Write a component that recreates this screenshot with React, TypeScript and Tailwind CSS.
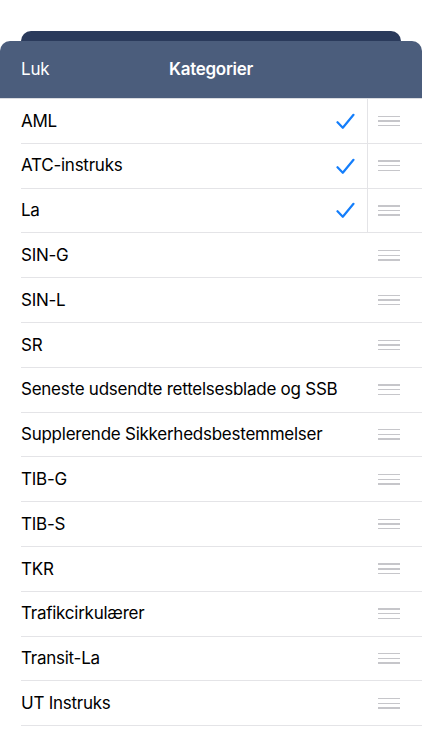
import React from "react";

const items: { name: string; checked: boolean }[] = [
  { name: "AML", checked: true },
  { name: "ATC-instruks", checked: true },
  { name: "La", checked: true },
  { name: "SIN-G", checked: false },
  { name: "SIN-L", checked: false },
  { name: "SR", checked: false },
  { name: "Seneste udsendte rettelsesblade og SSB", checked: false },
  { name: "Supplerende Sikkerhedsbestemmelser", checked: false },
  { name: "TIB-G", checked: false },
  { name: "TIB-S", checked: false },
  { name: "TKR", checked: false },
  { name: "Trafikcirkulærer", checked: false },
  { name: "Transit-La", checked: false },
  { name: "UT Instruks", checked: false },
];

function Check() {
  return (
    <svg width="19" height="17" viewBox="0 0 19 17" fill="none">
      <path d="M1.5 9.2 L6.8 14.8 L17.5 1.8" stroke="#147efb" strokeWidth="2.2" strokeLinecap="round" strokeLinejoin="round" />
    </svg>
  );
}

function Grip() {
  return (
    <div className="flex flex-col gap-[3.3px]">
      <div className="w-[22px] h-[1.4px] bg-[#c6c6ca]" />
      <div className="w-[22px] h-[1.4px] bg-[#c6c6ca]" />
      <div className="w-[22px] h-[1.4px] bg-[#c6c6ca]" />
    </div>
  );
}

export default function App() {
  return (
    <div
      className="w-[422px] h-[750px] bg-white overflow-hidden flex flex-col"
      style={{ fontFamily: "Inter, 'Liberation Sans', sans-serif" }}
    >
      <div className="h-[31px] shrink-0" />
      <div className="mx-[21px] h-[11px] bg-[#2a3a5b] rounded-t-[10px] shrink-0" />
      <div className="bg-[#4b5d7c] rounded-t-[10px] h-[57px] mt-[-1px] shrink-0 flex items-center relative px-[21px] pt-[1px]">
        <span className="text-white text-[17px] tracking-[-0.2px]">Luk</span>
        <span className="absolute left-0 right-0 text-center text-white text-[17px] font-semibold tracking-[-0.3px] pointer-events-none">
          Kategorier
        </span>
      </div>
      <div className="h-px bg-[#d9dbe0] shrink-0" />
      <div className="flex flex-col">
        {items.map((it) => (
          <div key={it.name} className="pl-[21px] shrink-0">
            <div className="flex h-[44.8px] border-b border-[#e4e4e7]">
              <div className="flex-1 flex items-center justify-between pr-[12px] pt-[1px]">
                <span className="text-[17px] text-black tracking-[-0.25px]">{it.name}</span>
                {it.checked && <Check />}
              </div>
              <div
                className={
                  "w-[55px] flex items-center pl-[10px] " +
                  (it.checked ? "border-l border-[#e4e4e7]" : "border-l border-transparent")
                }
              >
                <Grip />
              </div>
            </div>
          </div>
        ))}
      </div>
    </div>
  );
}
